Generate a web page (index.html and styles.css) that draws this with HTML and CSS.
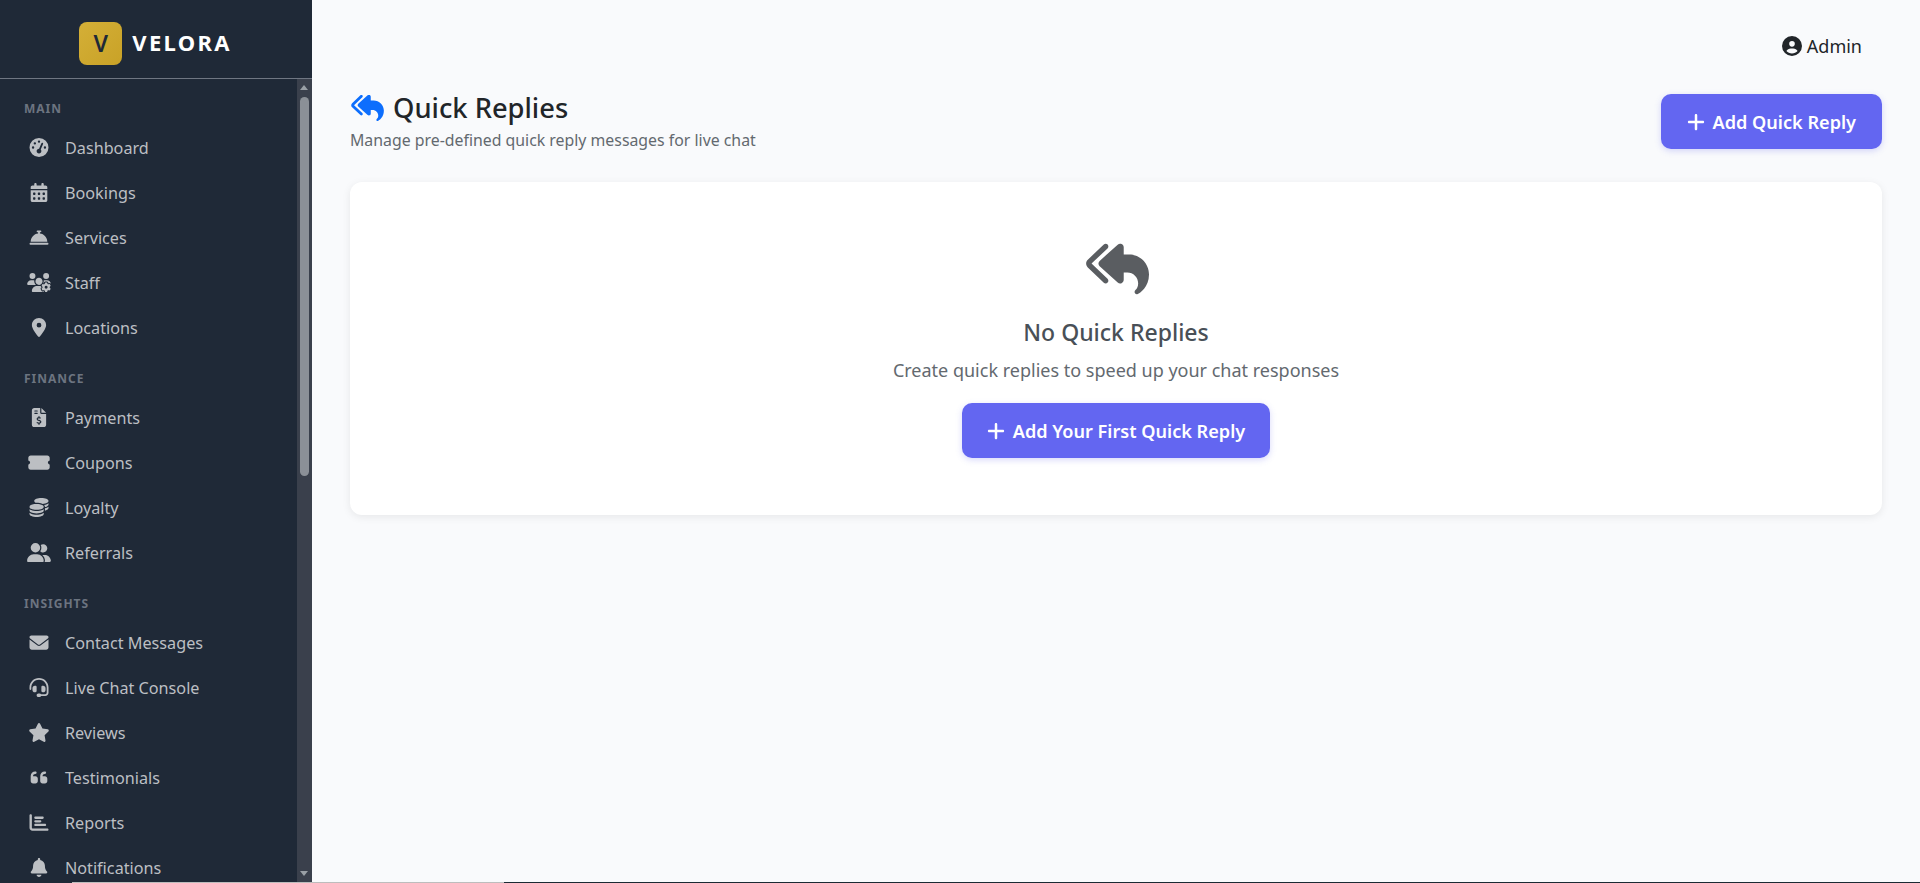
FILE: index.html
```html
<!DOCTYPE html>
<html>
<head>
    <meta charset="utf-8">
    <title>Quick Replies - Velora Admin</title>
    <link rel="stylesheet" href="styles.css">
</head>
<body>
    <svg class="sprite" xmlns="http://www.w3.org/2000/svg">
        <symbol id="i-gauge" viewBox="0 0 512 512"><path d="M0 256a256 256 0 1 1 512 0A256 256 0 1 1 0 256zM288 96a32 32 0 1 0 -64 0 32 32 0 1 0 64 0zM256 416c35.3 0 64-28.7 64-64c0-17.4-6.9-33.1-18.1-44.6L366 161.7c5.3-12.1-.2-26.3-12.3-31.6s-26.3 .2-31.6 12.3L257.9 288c-.6 0-1.3 0-1.9 0c-35.3 0-64 28.7-64 64s28.7 64 64 64zM176 144a32 32 0 1 0 -64 0 32 32 0 1 0 64 0zM96 288a32 32 0 1 0 0-64 32 32 0 1 0 0 64zm352-32a32 32 0 1 0 -64 0 32 32 0 1 0 64 0z"/></symbol>
        <symbol id="i-calendar" viewBox="0 0 448 512"><path d="M128 0c17.7 0 32 14.3 32 32V64H288V32c0-17.7 14.3-32 32-32s32 14.3 32 32V64h48c26.5 0 48 21.5 48 48v48H0V112C0 85.5 21.5 64 48 64H96V32c0-17.7 14.3-32 32-32zM0 192H448V464c0 26.5-21.5 48-48 48H48c-26.5 0-48-21.5-48-48V192zm64 80v32c0 8.8 7.2 16 16 16h32c8.8 0 16-7.2 16-16V272c0-8.8-7.2-16-16-16H80c-8.8 0-16 7.2-16 16zm128 0v32c0 8.8 7.2 16 16 16h32c8.8 0 16-7.2 16-16V272c0-8.8-7.2-16-16-16H208c-8.8 0-16 7.2-16 16zm144-16c-8.8 0-16 7.2-16 16v32c0 8.8 7.2 16 16 16h32c8.8 0 16-7.2 16-16V272c0-8.8-7.2-16-16-16H336zM64 400v32c0 8.8 7.2 16 16 16h32c8.8 0 16-7.2 16-16V400c0-8.8-7.2-16-16-16H80c-8.8 0-16 7.2-16 16zm144-16c-8.8 0-16 7.2-16 16v32c0 8.8 7.2 16 16 16h32c8.8 0 16-7.2 16-16V400c0-8.8-7.2-16-16-16H208zm112 16v32c0 8.8 7.2 16 16 16h32c8.8 0 16-7.2 16-16V400c0-8.8-7.2-16-16-16H336c-8.8 0-16 7.2-16 16z"/></symbol>
        <symbol id="i-concierge" viewBox="0 0 512 512"><path d="M216 64c-13.3 0-24 10.7-24 24s10.7 24 24 24h16v33.3C119.6 157.2 32 252.4 32 368H480c0-115.6-87.6-210.8-200-222.7V112h16c13.3 0 24-10.7 24-24s-10.7-24-24-24H256 216zM24 400c-13.3 0-24 10.7-24 24s10.7 24 24 24H488c13.3 0 24-10.7 24-24s-10.7-24-24-24H24z"/></symbol>
        <symbol id="i-users-gear" viewBox="0 0 640 512"><path d="M144 160A80 80 0 1 0 144 0a80 80 0 1 0 0 160zm368 0A80 80 0 1 0 512 0a80 80 0 1 0 0 160zM0 298.7C0 310.4 9.6 320 21.3 320H234.7c.2 0 .4 0 .7 0c-26.6-23.5-43.3-57.8-43.3-96c0-7.6 .7-15 1.9-22.3c-13.6-6.3-28.7-9.7-44.6-9.7H106.7C47.8 192 0 239.8 0 298.7zM320 320c24 0 45.9-8.8 62.7-23.3c2.5-3.7 5.2-7.3 8-10.7c2.7-3.3 5.7-6.1 9-8.3C410 262.3 416 243.9 416 224c0-53-43-96-96-96s-96 43-96 96s43 96 96 96zm65.4 60.2c-10.3-5.9-18.1-16.2-20.8-28.2H261.3C187.7 352 128 411.7 128 485.3c0 14.7 11.9 26.7 26.7 26.7H455.2c-2.1-5.2-3.2-10.9-3.2-16.4v-3c-1.3-.7-2.7-1.5-4-2.3l-2.6 1.5c-16.8 9.7-40.5 8-54.7-9.7c-4.5-5.6-8.6-11.5-12.4-17.6l-.1-.2-.1-.2-2.4-4.1-.1-.2-.1-.2c-3.4-6.2-6.4-12.6-9-19.3c-8.2-21.2 2.2-42.6 19-52.3l2.7-1.5c0-.8 0-1.5 0-2.3s0-1.5 0-2.3l-2.7-1.5zM533.3 192H490.7c-15.9 0-31 3.5-44.6 9.7c1.3 7.2 1.9 14.7 1.9 22.3c0 17.4-3.5 33.9-9.7 49c2.5 .9 4.9 2 7.1 3.3l2.6 1.5c1.3-.8 2.6-1.6 4-2.3v-3c0-19.4 13.3-39.1 35.8-42.6c7.9-1.2 16-1.9 24.2-1.9s16.3 .6 24.2 1.9c22.5 3.5 35.8 23.2 35.8 42.6v3c1.3 .7 2.7 1.5 4 2.3l2.6-1.5c16.8-9.7 40.5-8 54.7 9.7c2.3 2.8 4.5 5.8 6.6 8.7c-2.1-57.1-49-102.7-106.6-102.7zm91.3 163.9c6.3-3.6 9.5-11.1 6.8-18c-2.1-5.5-4.6-10.8-7.4-15.9l-2.3-4c-3.1-5.1-6.5-9.9-10.2-14.5c-4.6-5.7-12.7-6.7-19-3l-2.9 1.7c-9.2 5.3-20.4 4-29.6-1.3s-16.1-14.5-16.1-25.1v-3.4c0-7.3-4.9-13.8-12.1-14.9c-6.5-1-13.1-1.5-19.9-1.5s-13.4 .5-19.9 1.5c-7.2 1.1-12.1 7.6-12.1 14.9v3.4c0 10.6-6.9 19.8-16.1 25.1s-20.4 6.6-29.6 1.3l-2.9-1.7c-6.3-3.6-14.4-2.6-19 3c-3.7 4.6-7.1 9.5-10.2 14.6l-2.3 3.9c-2.8 5.1-5.3 10.4-7.4 15.9c-2.6 6.8 .5 14.3 6.8 17.9l2.9 1.7c9.2 5.3 13.7 15.8 13.7 26.4s-4.5 21.1-13.7 26.4l-3 1.7c-6.3 3.6-9.5 11.1-6.8 17.9c2.1 5.5 4.6 10.7 7.4 15.8l2.4 4.1c3 5.1 6.4 9.9 10.1 14.5c4.6 5.7 12.7 6.7 19 3l2.9-1.7c9.2-5.3 20.4-4 29.6 1.3s16.1 14.5 16.1 25.1v3.4c0 7.3 4.9 13.8 12.1 14.9c6.5 1 13.1 1.5 19.9 1.5s13.4-.5 19.9-1.5c7.2-1.1 12.1-7.6 12.1-14.9v-3.4c0-10.6 6.9-19.8 16.1-25.1s20.4-6.6 29.6-1.3l2.9 1.7c6.3 3.6 14.4 2.6 19-3c3.7-4.6 7.1-9.4 10.1-14.5l2.4-4.2c2.8-5.1 5.3-10.3 7.4-15.8c2.6-6.8-.5-14.3-6.8-17.9l-3-1.7c-9.2-5.3-13.7-15.8-13.7-26.4s4.5-21.1 13.7-26.4l3-1.7zM472 384a40 40 0 1 1 80 0 40 40 0 1 1 -80 0z"/></symbol>
        <symbol id="i-location" viewBox="0 0 384 512"><path d="M215.7 499.2C267 435 384 279.4 384 192C384 86 298 0 192 0S0 86 0 192c0 87.4 117 243 168.3 307.2c12.3 15.3 35.1 15.3 47.4 0zM192 128a64 64 0 1 1 0 128 64 64 0 1 1 0-128z"/></symbol>
        <symbol id="i-invoice" viewBox="0 0 384 512"><path d="M64 0C28.7 0 0 28.7 0 64V448c0 35.3 28.7 64 64 64H320c35.3 0 64-28.7 64-64V160H256c-17.7 0-32-14.3-32-32V0H64zM256 0V128H384L256 0zM64 80c0-8.8 7.2-16 16-16h64c8.8 0 16 7.2 16 16s-7.2 16-16 16H80c-8.8 0-16-7.2-16-16zm0 64c0-8.8 7.2-16 16-16h64c8.8 0 16 7.2 16 16s-7.2 16-16 16H80c-8.8 0-16-7.2-16-16zm128 72c8.8 0 16 7.2 16 16v17.3c8.5 1.2 16.7 3.1 24.1 5.1c8.5 2.3 13.6 11 11.3 19.6s-11 13.6-19.6 11.3c-11.1-3-22-5.2-32.1-5.3c-8.4-.1-17.4 1.8-23.6 5.5c-5.7 3.4-8.1 7.3-8.1 12.8c0 3.7 1.3 6.5 7.3 10.1c6.9 4.1 16.6 7.1 29.2 10.9l.5 .1 0 0 0 0c11.3 3.4 25.3 7.6 36.3 14.6c12.1 7.6 22.4 19.7 22.7 38.2c.3 19.3-9.6 33.3-22.9 41.6c-7.7 4.8-16.4 7.6-25.1 9.1V440c0 8.8-7.2 16-16 16s-16-7.2-16-16V422.2c-11.2-2.1-21.7-5.7-30.9-8.9l0 0 0 0c-2.1-.7-4.2-1.4-6.2-2.1c-8.4-2.8-12.9-11.9-10.1-20.2s11.9-12.9 20.2-10.1c2.5 .8 4.8 1.6 7.1 2.4l0 0 0 0 0 0c13.6 4.6 24.6 8.4 36.3 8.7c9.1 .3 17.9-1.7 23.7-5.3c5.1-3.2 7.9-7.3 7.8-14c-.1-4.6-1.8-7.8-7.7-11.6c-6.8-4.3-16.5-7.4-29-11.2l-1.6-.5 0 0c-11-3.3-24.3-7.3-34.8-13.7c-12-7.2-22.6-18.9-22.7-37.3c-.1-19.4 10.8-32.8 23.8-40.5c7.5-4.4 15.8-7.2 24.1-8.7V232c0-8.8 7.2-16 16-16z"/></symbol>
        <symbol id="i-ticket" viewBox="0 0 576 512"><path d="M0 128C0 92.7 28.7 64 64 64H512c35.3 0 64 28.7 64 64v64c0 8.8-7.4 15.7-15.7 18.6C541.5 217.1 528 235 528 256s13.5 38.9 32.3 45.4c8.3 2.9 15.7 9.8 15.7 18.6v64c0 35.3-28.7 64-64 64H64c-35.3 0-64-28.7-64-64V320c0-8.8 7.4-15.7 15.7-18.6C34.5 294.9 48 277 48 256s-13.5-38.9-32.3-45.4C7.4 207.7 0 200.8 0 192V128z"/></symbol>
        <symbol id="i-coins" viewBox="0 0 512 512"><path d="M512 80c0 18-14.3 34.6-38.4 48c-29.1 16.1-72.5 27.5-122.3 30.9c-3.7-1.8-7.4-3.5-11.3-5C300.6 137.4 248.2 128 192 128c-8.3 0-16.4 .2-24.5 .6l-1.1-.6C142.3 114.6 128 98 128 80c0-44.2 86-80 192-80S512 35.8 512 80zM160.7 161.1c10.2-.7 20.7-1.1 31.3-1.1c62.2 0 117.4 12.3 152.5 31.4C369.3 204.9 384 221.7 384 240c0 4-.7 7.9-2.1 11.7c-4.6 13.2-17 25.3-35 35.5c0 0 0 0 0 0c-.1 .1-.3 .1-.4 .2l0 0 0 0c-.3 .2-.6 .3-.9 .5c-35 19.4-90.8 32-153.6 32c-59.6 0-112.9-11.3-148.2-29.1c-1.9-.9-3.7-1.9-5.5-2.9C14.3 274.6 0 258 0 240c0-34.8 53.4-64.5 128-75.4c10.5-1.5 21.4-2.7 32.7-3.5zM416 240c0-21.9-10.6-39.9-24.1-53.4c28.3-4.4 54.2-11.4 76.2-20.5c16.3-6.8 31.5-15.2 43.9-25.5V176c0 19.3-16.5 37.1-43.8 50.9c-14.6 7.4-32.4 13.7-52.4 18.5c.1-1.8 .2-3.5 .2-5.3zm-32 96c0 18-14.3 34.6-38.4 48c-1.8 1-3.6 1.9-5.5 2.9C304.9 404.7 251.6 416 192 416c-62.8 0-118.6-12.6-153.6-32C14.3 370.6 0 354 0 336V300.6c12.5 10.3 27.6 18.7 43.9 25.5C83.4 342.6 135.8 352 192 352s108.6-9.4 148.1-25.9c7.8-3.2 15.3-6.9 22.4-10.9c6.1-3.4 11.8-7.2 17.2-11.2c1.5-1.1 2.9-2.3 4.3-3.4V304v5.7V336zm32 0V304 278.1c19-4.2 36.5-9.5 52.1-16c16.3-6.8 31.5-15.2 43.9-25.5V272c0 10.5-5 21-14.9 30.9c-16.3 16.3-45 29.7-81.3 38.4c.1-1.7 .2-3.5 .2-5.3zM192 448c56.2 0 108.6-9.4 148.1-25.9c16.3-6.8 31.5-15.2 43.9-25.5V432c0 44.2-86 80-192 80S0 476.2 0 432V396.6c12.5 10.3 27.6 18.7 43.9 25.5C83.4 438.6 135.8 448 192 448z"/></symbol>
        <symbol id="i-user-group" viewBox="0 0 640 512"><path d="M96 128a128 128 0 1 1 256 0A128 128 0 1 1 96 128zM0 482.3C0 383.8 79.8 304 178.3 304h91.4C368.2 304 448 383.8 448 482.3c0 16.4-13.3 29.7-29.7 29.7H29.7C13.3 512 0 498.7 0 482.3zM609.3 512H471.4c5.4-9.4 8.6-20.3 8.6-32v-8c0-60.7-27.1-115.2-69.8-151.8c2.4-.1 4.7-.2 7.1-.2h61.4C567.8 320 640 392.2 640 481.3c0 17-13.8 30.7-30.7 30.7zM432 256c-31 0-59-12.6-79.3-32.9C372.4 196.5 384 163.6 384 128c0-26.8-6.6-52.1-18.3-74.3C384.3 40.1 407.2 32 432 32c61.9 0 112 50.1 112 112s-50.1 112-112 112z"/></symbol>
        <symbol id="i-envelope" viewBox="0 0 512 512"><path d="M48 64C21.5 64 0 85.5 0 112c0 15.1 7.1 29.3 19.2 38.4L236.8 313.6c11.4 8.5 27 8.5 38.4 0L492.8 150.4c12.1-9.1 19.2-23.3 19.2-38.4c0-26.5-21.5-48-48-48H48zM0 176V384c0 35.3 28.7 64 64 64H448c35.3 0 64-28.7 64-64V176L294.4 339.2c-22.8 17.1-54 17.1-76.8 0L0 176z"/></symbol>
        <symbol id="i-headset" viewBox="0 0 512 512"><path d="M256 48C141.1 48 48 141.1 48 256v40c0 13.3-10.7 24-24 24s-24-10.7-24-24V256C0 114.6 114.6 0 256 0S512 114.6 512 256V400.1c0 48.6-39.4 88-88.1 88L313.6 488c-8.3 14.3-23.8 24-41.6 24H240c-26.5 0-48-21.5-48-48s21.5-48 48-48h32c17.8 0 33.3 9.7 41.6 24l110.4 .1c22.1 0 40-17.9 40-40V256c0-114.9-93.1-208-208-208zM144 208h16c17.7 0 32 14.3 32 32V352c0 17.7-14.3 32-32 32H144c-35.3 0-64-28.7-64-64V272c0-35.3 28.7-64 64-64zm224 0c35.3 0 64 28.7 64 64v48c0 35.3-28.7 64-64 64H352c-17.7 0-32-14.3-32-32V240c0-17.7 14.3-32 32-32h16z"/></symbol>
        <symbol id="i-star" viewBox="0 0 576 512"><path d="M316.9 18C311.6 7 300.4 0 288.1 0s-23.4 7-28.8 18L195 150.3 51.4 171.5c-12 1.8-22 10.2-25.7 21.7s-.7 24.2 7.9 32.7L137.8 329 113.2 474.7c-2 12 3 24.2 12.9 31.3s23 8 33.8 2.3l128.3-68.5 128.3 68.5c10.8 5.7 23.9 4.9 33.8-2.3s14.9-19.3 12.9-31.3L438.5 329 542.7 225.9c8.6-8.5 11.7-21.2 7.9-32.7s-13.7-19.9-25.7-21.7L381.2 150.3 316.9 18z"/></symbol>
        <symbol id="i-quote" viewBox="0 0 448 512"><path d="M0 216C0 149.7 53.7 96 120 96h8c17.7 0 32 14.3 32 32s-14.3 32-32 32h-8c-30.9 0-56 25.1-56 56v8h64c35.3 0 64 28.7 64 64v64c0 35.3-28.7 64-64 64H64c-35.3 0-64-28.7-64-64V320 288 216zm256 0c0-66.3 53.7-120 120-120h8c17.7 0 32 14.3 32 32s-14.3 32-32 32h-8c-30.9 0-56 25.1-56 56v8h64c35.3 0 64 28.7 64 64v64c0 35.3-28.7 64-64 64H320c-35.3 0-64-28.7-64-64V320 288 216z"/></symbol>
        <symbol id="i-chart" viewBox="0 0 512 512"><path d="M32 32c17.7 0 32 14.3 32 32V400c0 8.8 7.2 16 16 16H480c17.7 0 32 14.3 32 32s-14.3 32-32 32H80c-44.2 0-80-35.8-80-80V64C0 46.3 14.3 32 32 32zm96 96c0-17.7 14.3-32 32-32l192 0c17.7 0 32 14.3 32 32s-14.3 32-32 32l-192 0c-17.7 0-32-14.3-32-32zm32 64H288c17.7 0 32 14.3 32 32s-14.3 32-32 32H160c-17.7 0-32-14.3-32-32s14.3-32 32-32zm0 96H416c17.7 0 32 14.3 32 32s-14.3 32-32 32H160c-17.7 0-32-14.3-32-32s14.3-32 32-32z"/></symbol>
        <symbol id="i-bell" viewBox="0 0 448 512"><path d="M224 0c-17.7 0-32 14.3-32 32V51.2C119 66 64 130.6 64 208v18.8c0 47-17.3 92.4-48.5 127.6l-7.4 8.3c-8.4 9.4-10.4 22.9-5.3 34.4S19.4 416 32 416H416c12.6 0 24-7.4 29.2-18.9s3.1-25-5.3-34.4l-7.4-8.3C401.3 319.2 384 273.9 384 226.8V208c0-77.4-55-142-128-156.8V32c0-17.7-14.3-32-32-32zm45.3 493.3c12-12 18.7-28.3 18.7-45.3H224 160c0 17 6.7 33.3 18.7 45.3s28.3 18.7 45.3 18.7s33.3-6.7 45.3-18.7z"/></symbol>
        <symbol id="i-reply-all" viewBox="0 0 576 512"><path d="M209.4 39.5c-9.1-9.6-24.3-10-33.9-.9L33.8 173.2c-19.9 18.9-19.9 50.7 0 69.6L175.5 377.4c9.6 9.1 24.8 8.7 33.9-.9s8.7-24.8-.9-33.9L66.8 208 208.5 73.4c9.6-9.1 10-24.3 .9-33.9zM352 64c0-12.6-7.4-24.1-19-29.2s-25-3-34.4 5.4l-160 144c-6.7 6.1-10.6 14.7-10.6 23.8s3.9 17.7 10.6 23.8l160 144c9.4 8.5 22.9 10.6 34.4 5.4s19-16.6 19-29.2V288h32c53 0 96 43 96 96c0 30.4-12.8 47.9-22.2 56.7c-5.5 5.1-9.8 12-9.8 19.5c0 10.9 8.8 19.7 19.7 19.7c2.8 0 5.6-.6 8.1-1.9C494.5 467.9 576 417.3 576 304c0-97.2-78.8-176-176-176H352V64z"/></symbol>
        <symbol id="i-circle-user" viewBox="0 0 512 512"><path d="M399 384.2C376.9 345.8 335.4 320 288 320H224c-47.4 0-88.9 25.8-111 64.2c35.2 39.2 86.2 63.8 143 63.8s107.8-24.7 143-63.8zM0 256a256 256 0 1 1 512 0A256 256 0 1 1 0 256zm256 16a72 72 0 1 0 0-144 72 72 0 1 0 0 144z"/></symbol>
        <symbol id="i-plus" viewBox="0 0 448 512"><path d="M256 80c0-17.7-14.3-32-32-32s-32 14.3-32 32V224H48c-17.7 0-32 14.3-32 32s14.3 32 32 32H192V432c0 17.7 14.3 32 32 32s32-14.3 32-32V288H400c17.7 0 32-14.3 32-32s-14.3-32-32-32H256V80z"/></symbol>
    </svg>

    <div class="layout">
        <aside class="sidebar">
            <div class="brand">
                <span class="brand-mark">V</span>
                <span class="brand-name">VELORA</span>
            </div>
            <nav class="side-nav">
                <div class="nav-label">MAIN</div>
                <a class="nav-item" href="#"><span class="nav-icon"><svg><use href="#i-gauge"/></svg></span>Dashboard</a>
                <a class="nav-item" href="#"><span class="nav-icon"><svg><use href="#i-calendar"/></svg></span>Bookings</a>
                <a class="nav-item" href="#"><span class="nav-icon"><svg><use href="#i-concierge"/></svg></span>Services</a>
                <a class="nav-item" href="#"><span class="nav-icon"><svg><use href="#i-users-gear"/></svg></span>Staff</a>
                <a class="nav-item" href="#"><span class="nav-icon"><svg><use href="#i-location"/></svg></span>Locations</a>

                <div class="nav-label">FINANCE</div>
                <a class="nav-item" href="#"><span class="nav-icon"><svg><use href="#i-invoice"/></svg></span>Payments</a>
                <a class="nav-item" href="#"><span class="nav-icon"><svg><use href="#i-ticket"/></svg></span>Coupons</a>
                <a class="nav-item" href="#"><span class="nav-icon"><svg><use href="#i-coins"/></svg></span>Loyalty</a>
                <a class="nav-item" href="#"><span class="nav-icon"><svg><use href="#i-user-group"/></svg></span>Referrals</a>

                <div class="nav-label">INSIGHTS</div>
                <a class="nav-item" href="#"><span class="nav-icon"><svg><use href="#i-envelope"/></svg></span>Contact Messages</a>
                <a class="nav-item" href="#"><span class="nav-icon"><svg><use href="#i-headset"/></svg></span>Live Chat Console</a>
                <a class="nav-item" href="#"><span class="nav-icon"><svg><use href="#i-star"/></svg></span>Reviews</a>
                <a class="nav-item" href="#"><span class="nav-icon"><svg><use href="#i-quote"/></svg></span>Testimonials</a>
                <a class="nav-item" href="#"><span class="nav-icon"><svg><use href="#i-chart"/></svg></span>Reports</a>
                <a class="nav-item" href="#"><span class="nav-icon"><svg><use href="#i-bell"/></svg></span>Notifications</a>
            </nav>
            <!-- scrollbar of the nav list -->
            <div class="scroll-track">
                <span class="scroll-up"></span>
                <span class="scroll-thumb"></span>
                <span class="scroll-down"></span>
            </div>
        </aside>

        <main class="main">
            <div class="topbar">
                <span class="user"><svg class="user-icon"><use href="#i-circle-user"/></svg>Admin</span>
            </div>

            <div class="page-head">
                <div class="page-text">
                    <h1 class="page-title"><svg class="title-icon"><use href="#i-reply-all"/></svg>Quick Replies</h1>
                    <p class="page-sub">Manage pre-defined quick reply messages for live chat</p>
                </div>
                <button class="btn btn-head"><svg class="btn-icon"><use href="#i-plus"/></svg>Add Quick Reply</button>
            </div>

            <section class="card">
                <svg class="empty-icon"><use href="#i-reply-all"/></svg>
                <h2 class="empty-title">No Quick Replies</h2>
                <p class="empty-sub">Create quick replies to speed up your chat responses</p>
                <button class="btn"><svg class="btn-icon"><use href="#i-plus"/></svg>Add Your First Quick Reply</button>
            </section>
        </main>
    </div>

    <!-- edge of the window behind, one pixel at the very bottom -->
    <div class="window-edge">
        <span class="edge-light"></span>
        <span class="edge-dark"></span>
    </div>
</body>
</html>
```

FILE: styles.css
```css
* {
    box-sizing: border-box;
}

html, body {
    height: 100%;
}

body {
    margin: 0;
    overflow: hidden;
    background: #f9fafc;
    color: #212529;
    font-family: "Noto Sans", "Open Sans", sans-serif;
}

.sprite {
    display: none;
}

.layout {
    display: flex;
    height: 100%;
}

/* sidebar */
.sidebar {
    position: relative;
    width: 312px;
    flex-shrink: 0;
    display: flex;
    flex-direction: column;
    background: #1f2937;
}

.brand {
    height: 79px;
    flex-shrink: 0;
    display: flex;
    align-items: center;
    justify-content: center;
    gap: 10px;
    padding: 8px 1px 0 0;
    border-bottom: 1px solid #6f7682;
}

.brand-mark {
    width: 43px;
    height: 43px;
    display: flex;
    align-items: center;
    justify-content: center;
    border-radius: 8px;
    background: linear-gradient(135deg, #d4af37, #c9a227);
    color: #1f2937;
    font-size: 23px;
    font-weight: 600;
}

.brand-name {
    padding-bottom: 2px;
    color: #fff;
    font-size: 22px;
    font-weight: 700;
    letter-spacing: 2.3px;
}

.side-nav {
    flex: 1;
    overflow: hidden;
    padding-top: 20px;
}

.nav-label {
    height: 20px;
    margin-bottom: 6px;
    padding-left: 24px;
    color: #6c7480;
    font-size: 12px;
    font-weight: 700;
    letter-spacing: 1px;
    line-height: 20px;
}

.nav-item {
    height: 45px;
    display: flex;
    align-items: center;
    padding-left: 24px;
    color: #bcbfc3;
    font-size: 16.2px;
    text-decoration: none;
}

.nav-item + .nav-label {
    margin-top: 19px;
}

.nav-icon {
    width: 30px;
    margin-right: 11px;
    display: flex;
    justify-content: center;
}

.nav-icon svg {
    width: 24px;
    height: 19px;
    fill: #bcbfc3;
}

.scroll-track {
    position: absolute;
    top: 79px;
    right: 0;
    bottom: 0;
    width: 15px;
    background: #3a404c;
}

.scroll-thumb {
    position: absolute;
    top: 18px;
    left: 3px;
    width: 9px;
    height: 379px;
    border-radius: 5px;
    background: #8b9097;
}

.scroll-up,
.scroll-down {
    position: absolute;
    left: 3px;
    width: 0;
    height: 0;
    border-left: 4.5px solid transparent;
    border-right: 4.5px solid transparent;
}

.scroll-up {
    top: 6px;
    border-bottom: 5px solid #9aa0a6;
}

.scroll-down {
    bottom: 7px;
    border-top: 5px solid #9aa0a6;
}

/* main */
.main {
    flex: 1;
    min-width: 0;
    padding: 0 38px;
}

.topbar {
    height: 92px;
    display: flex;
    justify-content: flex-end;
    align-items: center;
    padding-right: 20px;
}

.user {
    display: flex;
    align-items: center;
    gap: 5px;
    font-size: 18px;
}

.user-icon {
    width: 20px;
    height: 20px;
    fill: #212529;
}

.page-head {
    display: flex;
    justify-content: space-between;
    align-items: center;
    height: 59px;
    margin-bottom: 31px;
}

.page-text {
    align-self: flex-start;
    padding-top: 1px;
}

.page-title {
    display: flex;
    align-items: center;
    gap: 9px;
    margin: 0 0 6px;
    font-size: 27.3px;
    font-weight: 500;
    line-height: 30px;
}

.title-icon {
    width: 34px;
    height: 30px;
    fill: #0d6efd;
}

.page-sub {
    margin: 0;
    color: #63696f;
    font-size: 15.85px;
    line-height: 23px;
}

.btn {
    display: inline-flex;
    align-items: center;
    justify-content: center;
    gap: 8px;
    height: 55px;
    padding: 0 25px;
    border: 0;
    border-radius: 10px;
    background: #6366f1;
    color: #fff;
    font-family: inherit;
    font-size: 18.1px;
    font-weight: 600;
    box-shadow: 0 2px 6px rgba(99, 102, 241, 0.25);
}

.btn-head {
    padding: 0 26px;
}

.btn-icon {
    width: 18px;
    height: 20px;
    fill: #fff;
}

.card {
    height: 333px;
    display: flex;
    flex-direction: column;
    align-items: center;
    padding-top: 58px;
    border-radius: 12px;
    background: #fff;
    box-shadow: 0 2px 8px rgba(0, 0, 0, 0.08);
}

.empty-icon {
    width: 65px;
    height: 58px;
    fill: #5a5d61;
}

.empty-title {
    margin: 18px 0 0;
    color: #495057;
    font-size: 23px;
    font-weight: 500;
    line-height: 32px;
}

.empty-sub {
    margin: 9px 0 20px;
    color: #63696f;
    font-size: 18px;
    line-height: 26px;
}

/* 1px strip */
.window-edge {
    position: absolute;
    left: 72px;
    right: 0;
    bottom: 0;
    height: 1px;
    display: flex;
}

.edge-light {
    width: 432px;
    background: #bdbdbd;
}

.edge-dark {
    flex: 1;
    background: #1b2a33;
}
```
